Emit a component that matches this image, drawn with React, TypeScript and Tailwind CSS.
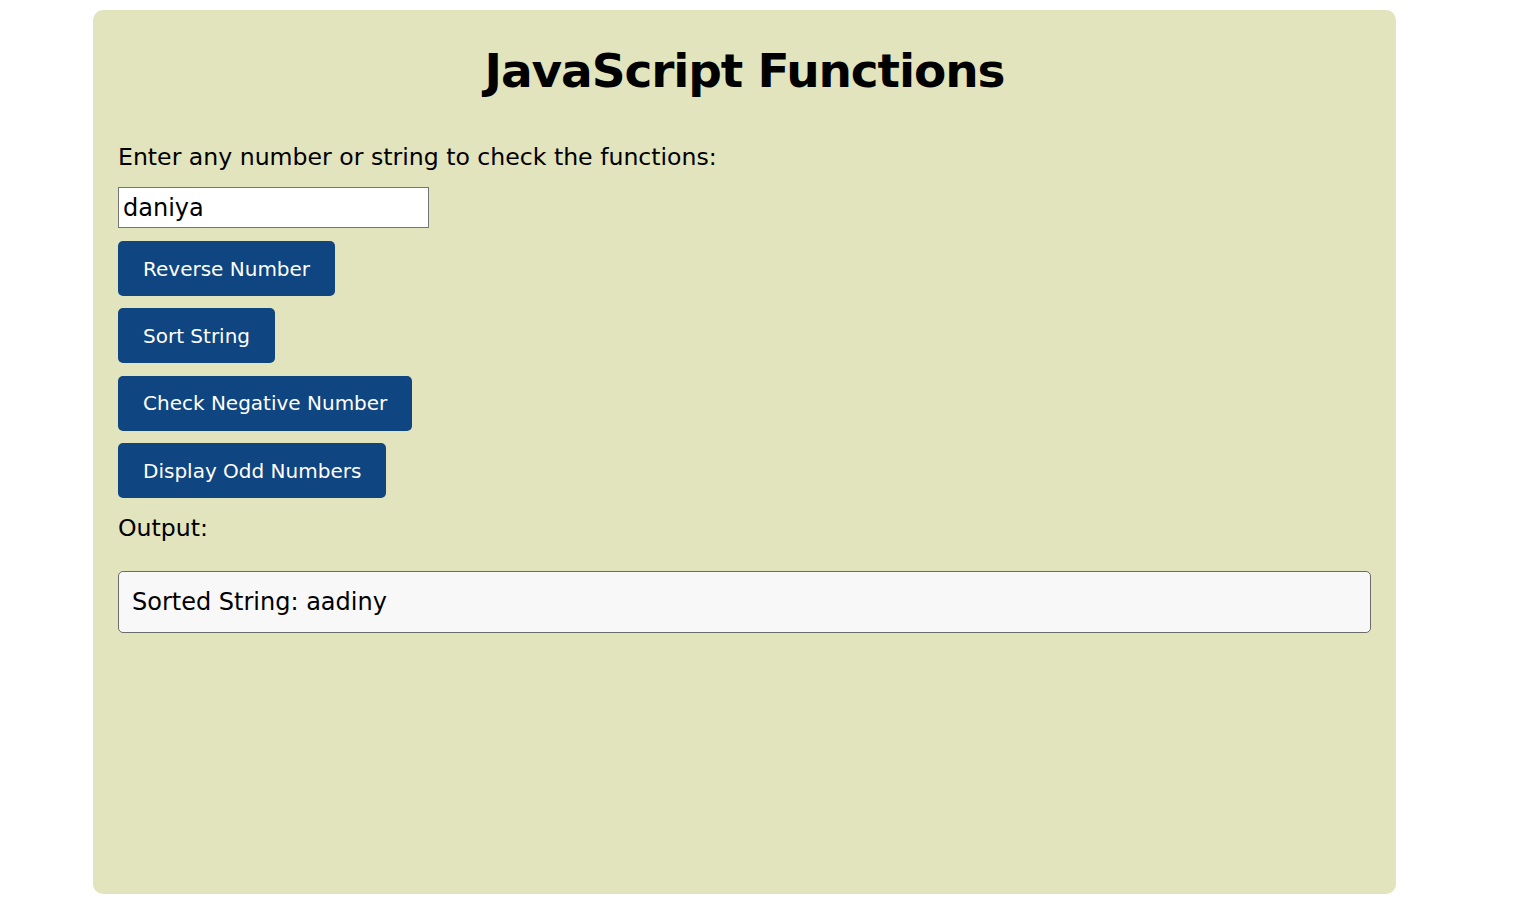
import React, { useState } from 'react';

const font = { fontFamily: '"DejaVu Sans", Inter, sans-serif' };

const App: React.FC = () => {
    const [value, setValue] = useState('daniya');
    const [output, setOutput] = useState('Sorted String: aadiny');

    const reverseNumber = () => setOutput('Reversed Number: ' + value.split('').reverse().join(''));
    const sortString = () => setOutput('Sorted String: ' + value.split('').sort().join(''));
    const checkNegative = () => {
        const n = Number(value);
        if (isNaN(n)) setOutput('Please enter a valid number');
        else setOutput(n < 0 ? 'The number is negative' : 'The number is not negative');
    };
    const displayOdd = () => {
        const n = Number(value);
        if (isNaN(n)) return setOutput('Please enter a valid number');
        const odds: number[] = [];
        for (let i = 1; i <= n; i += 2) odds.push(i);
        setOutput('Odd Numbers: ' + odds.join(', '));
    };

    const buttons = [
        { label: 'Reverse Number', onClick: reverseNumber },
        { label: 'Sort String', onClick: sortString },
        { label: 'Check Negative Number', onClick: checkNegative },
        { label: 'Display Odd Numbers', onClick: displayOdd },
    ];

    return (
        <div className="min-h-[903px] bg-white pt-[10px] pl-[93px]" style={font}>
            {/* Carta principal */}
            <div className="w-[1303px] h-[884px] bg-[#e2e4bd] rounded-[10px] px-[25px] pt-[32px] text-black">
                <h1 className="text-center text-[47px] leading-[58px] font-bold tracking-[-1.1px]">JavaScript Functions</h1>

                <p className="mt-[41px] text-[23.6px] leading-[33px]">Enter any number or string to check the functions:</p>

                <input
                    type="text"
                    value={value}
                    onChange={(e) => setValue(e.target.value)}
                    className="mt-[13px] block w-[311px] h-[41px] bg-white border border-[#767676] px-[4px] text-[24px] outline-none"
                />

                <div className="mt-[13px] flex flex-col items-start gap-[12.4px]">
                    {buttons.map((b) => (
                        <button
                            key={b.label}
                            onClick={b.onClick}
                            className="h-[55px] px-[25px] bg-[#0f4580] text-white text-[20px] rounded-[5px]"
                        >
                            {b.label}
                        </button>
                    ))}
                </div>

                <p className="mt-[14px] text-[23.6px] leading-[33px]">Output:</p>

                <div className="mt-[26px] h-[62px] flex items-center px-[13px] bg-[#f8f8f8] border border-[#6b6b6b] rounded-[5px] text-[24px]">
                    {output}
                </div>
            </div>
        </div>
    );
};

export default App;
